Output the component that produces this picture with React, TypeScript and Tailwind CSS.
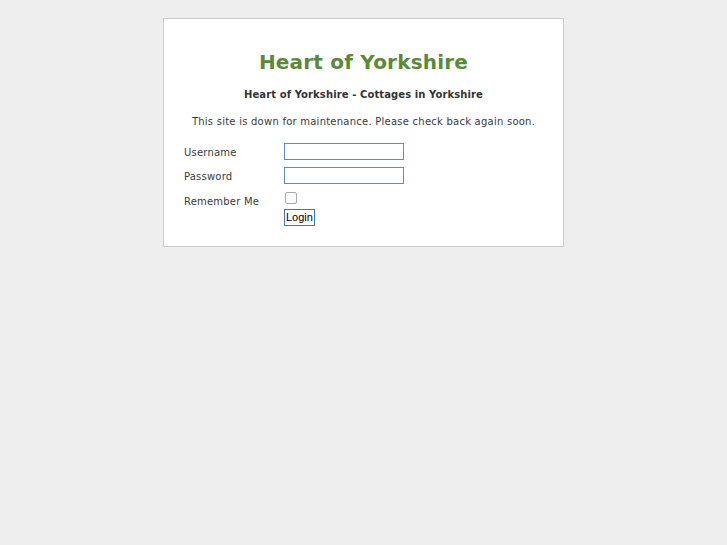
export default function App() {
  return (
    <div className="min-h-[545px] bg-[#eeeeee] pt-[18px] font-['DejaVu_Sans',sans-serif] text-[#333333]">
      <div className="mx-auto w-[401px] border border-[#cccccc] bg-white pt-[31px] pb-[20px] px-[20px]">
        <h1 className="text-center text-[20px] leading-[24px] font-bold tracking-[0.2px] text-[#5a8a38]">
          Heart of Yorkshire
        </h1>
        <h2 className="mt-[14px] text-center text-[10px] leading-[14px] font-bold tracking-[0.1px]">
          Heart of Yorkshire - Cottages in Yorkshire
        </h2>
        <p className="mt-[13px] text-center text-[10px] leading-[14px] tracking-[0.24px] text-[#3a3a3a]">
          This site is down for maintenance. Please check back again soon.
        </p>
        <form className="mt-[14px] flex flex-col text-[10px] tracking-[0.2px] text-[#3a3a3a]">
          <div className="flex items-center h-[17px]">
            <label className="w-[100px] pt-[1px]">Username</label>
            <input type="text" className="w-[120px] h-[17px] border border-[#5b8fc0] bg-white outline-none" />
          </div>
          <div className="mt-[7px] flex items-center h-[17px]">
            <label className="w-[100px] pt-[1px]">Password</label>
            <input type="password" className="w-[120px] h-[17px] border border-[#5b8fc0] bg-white outline-none" />
          </div>
          <div className="mt-[8px] flex items-start">
            <label className="w-[100px] pt-[2px]">Remember Me</label>
            <div className="flex flex-col items-start">
              <span className="block w-[12px] h-[12px] ml-[1px] border border-[#aaaaaa] rounded-[2px] bg-[#fafafa]" />
              <button
                type="button"
                className="mt-[5px] h-[17px] px-[1px] border border-[#3f78b0] bg-white text-[11px] leading-[13px] tracking-normal text-black font-['Liberation_Sans',sans-serif]"
              >
                Login
              </button>
            </div>
          </div>
        </form>
      </div>
    </div>
  );
}
